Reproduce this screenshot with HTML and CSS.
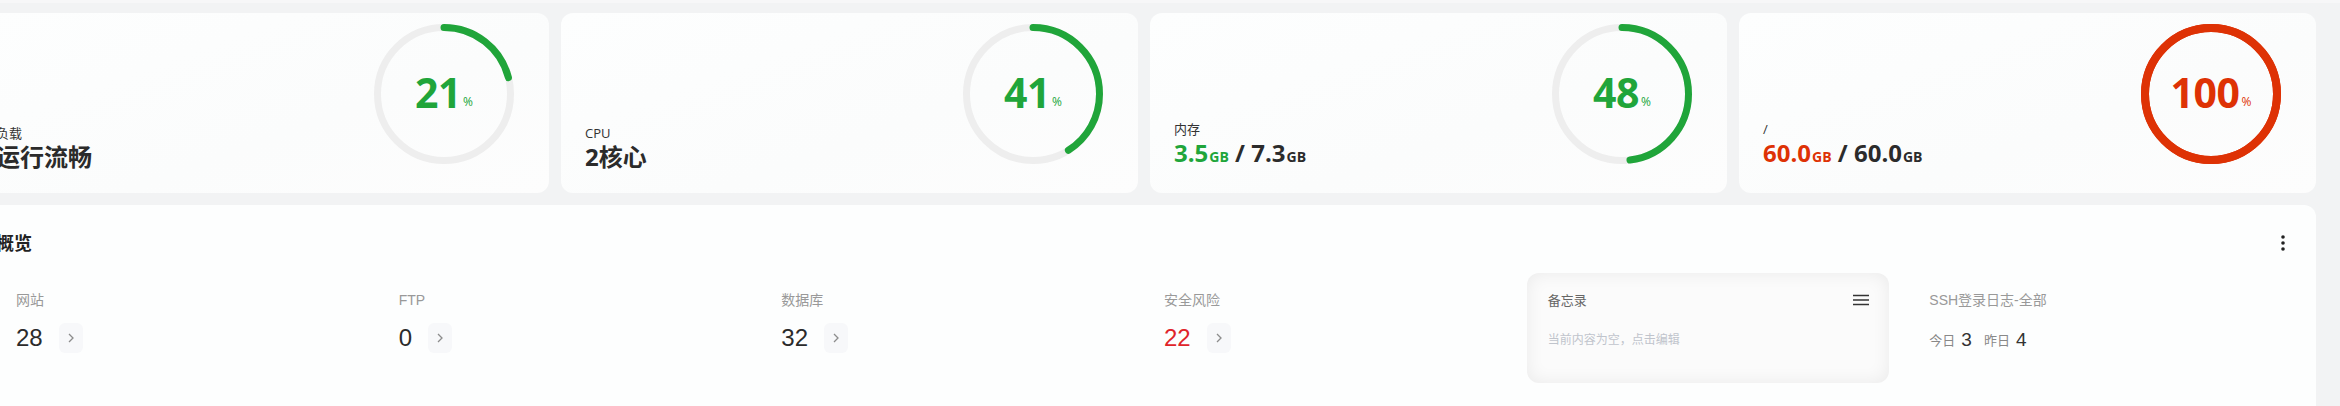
FILE: index.html
```html
<!DOCTYPE html>
<html lang="zh-CN">

<head>
    <meta charset="UTF-8" />
    <title>首页 - 状态</title>
    <link rel="stylesheet" href="styles.css">
</head>

<body>
    <div class="page">
        <section class="stats">
            <div class="stat-card">
                <div class="stat-info">
                    <div class="stat-label">负载</div>
                    <div class="stat-value">运行流畅</div>
                </div>
                <div class="ring">
                    <svg viewBox="0 0 140 140" width="140" height="140">
                        <circle class="ring-track" cx="70" cy="70" r="66.5" />
                        <circle class="ring-bar" cx="70" cy="70" r="66.5" stroke-dasharray="87.7 417.8" />
                    </svg>
                    <div class="ring-text">21<span class="pct">%</span></div>
                </div>
            </div>

            <div class="stat-card">
                <div class="stat-info">
                    <div class="stat-label">CPU</div>
                    <div class="stat-value">2核心</div>
                </div>
                <div class="ring">
                    <svg viewBox="0 0 140 140" width="140" height="140">
                        <circle class="ring-track" cx="70" cy="70" r="66.5" />
                        <circle class="ring-bar" cx="70" cy="70" r="66.5" stroke-dasharray="171.3 417.8" />
                    </svg>
                    <div class="ring-text">41<span class="pct">%</span></div>
                </div>
            </div>

            <div class="stat-card">
                <div class="stat-info">
                    <div class="stat-label">内存</div>
                    <div class="stat-value"><span class="ok">3.5<small>GB</small></span> / 7.3<small>GB</small></div>
                </div>
                <div class="ring">
                    <svg viewBox="0 0 140 140" width="140" height="140">
                        <circle class="ring-track" cx="70" cy="70" r="66.5" />
                        <circle class="ring-bar" cx="70" cy="70" r="66.5" stroke-dasharray="200.5 417.8" />
                    </svg>
                    <div class="ring-text">48<span class="pct">%</span></div>
                </div>
            </div>

            <div class="stat-card">
                <div class="stat-info">
                    <div class="stat-label">/</div>
                    <div class="stat-value"><span class="full">60.0<small>GB</small></span> / 60.0<small>GB</small></div>
                </div>
                <div class="ring ring-full">
                    <svg viewBox="0 0 140 140" width="140" height="140">
                        <circle class="ring-track" cx="70" cy="70" r="66" />
                        <circle class="ring-bar" cx="70" cy="70" r="66" stroke-dasharray="414.7 414.7" />
                    </svg>
                    <div class="ring-text">100<span class="pct">%</span></div>
                </div>
            </div>
        </section>

        <section class="overview">
            <div class="overview-head">
                <h2>概览</h2>
                <svg class="more" width="4" height="16" viewBox="0 0 4 16">
                    <circle cx="2" cy="2" r="1.8" />
                    <circle cx="2" cy="8" r="1.8" />
                    <circle cx="2" cy="14" r="1.8" />
                </svg>
            </div>

            <div class="overview-grid">
                <div class="ov-item">
                    <div class="ov-label">网站</div>
                    <div class="ov-row">
                        <span class="ov-num">28</span>
                        <span class="ov-go"><svg width="6" height="10" viewBox="0 0 6 10"><path d="M1 1l4 4-4 4" /></svg></span>
                    </div>
                </div>
                <div class="ov-item">
                    <div class="ov-label">FTP</div>
                    <div class="ov-row">
                        <span class="ov-num">0</span>
                        <span class="ov-go"><svg width="6" height="10" viewBox="0 0 6 10"><path d="M1 1l4 4-4 4" /></svg></span>
                    </div>
                </div>
                <div class="ov-item">
                    <div class="ov-label">数据库</div>
                    <div class="ov-row">
                        <span class="ov-num">32</span>
                        <span class="ov-go"><svg width="6" height="10" viewBox="0 0 6 10"><path d="M1 1l4 4-4 4" /></svg></span>
                    </div>
                </div>
                <div class="ov-item">
                    <div class="ov-label">安全风险</div>
                    <div class="ov-row">
                        <span class="ov-num danger">22</span>
                        <span class="ov-go"><svg width="6" height="10" viewBox="0 0 6 10"><path d="M1 1l4 4-4 4" /></svg></span>
                    </div>
                </div>
                <div class="memo">
                    <div class="memo-head">
                        <span>备忘录</span>
                        <svg width="16" height="12" viewBox="0 0 16 12">
                            <path d="M0 1.5h16M0 6h16M0 10.5h16" />
                        </svg>
                    </div>
                    <div class="memo-empty">当前内容为空，点击编辑</div>
                </div>
                <div class="ov-item">
                    <div class="ov-label">SSH登录日志-全部</div>
                    <div class="ssh-row">
                        <span>今日</span><b>3</b>
                        <span>昨日</span><b>4</b>
                    </div>
                </div>
            </div>
        </section>
    </div>
</body>

</html>
```

FILE: styles.css
```css
body {
    margin: 0;
    background: linear-gradient(180deg, #f7f7f8 0, #f7f7f8 3px, #f2f3f4 3px);
    font-family: 'Open Sans', 'Noto Sans CJK SC', sans-serif;
    color: #333;
    overflow: hidden;
}

.page {
    margin-left: -28px;
    padding: 13px 24px 0 0;
}

/* top stat cards */
.stats {
    display: grid;
    grid-template-columns: repeat(4, 1fr);
    gap: 12px;
}

.stat-card {
    height: 180px;
    box-sizing: border-box;
    padding: 0 24px;
    background: linear-gradient(160deg, #fdfefe 0%, #fbfcfc 60%, #fdfdfd 100%);
    border-radius: 12px;
    display: flex;
    justify-content: space-between;
}

.stat-info {
    align-self: flex-end;
    padding-bottom: 21px;
}

.stat-label {
    font-size: 13px;
    line-height: 18px;
    color: #333;
}

.stat-value {
    font-size: 24px;
    line-height: 30px;
    font-weight: 700;
    color: #2b2b2b;
}

.stat-value small {
    font-size: 14px;
    font-weight: 700;
    margin-left: 1px;
}

.stat-value .ok {
    color: #20a53a;
}

.stat-value .full {
    color: #de3205;
}

.ring {
    position: relative;
    width: 140px;
    height: 140px;
    margin: 11px 11px 0 0;
}

.ring svg {
    display: block;
    transform: rotate(-90deg);
}

.ring-track {
    fill: none;
    stroke: #eeeeee;
    stroke-width: 7;
}

.ring-bar {
    fill: none;
    stroke: #20a53a;
    stroke-width: 7;
    stroke-linecap: round;
}

.ring-full .ring-track,
.ring-full .ring-bar {
    stroke: #de3205;
    stroke-width: 8;
}

.ring-text {
    position: absolute;
    inset: 0;
    display: flex;
    align-items: center;
    justify-content: center;
    padding-bottom: 5px;
    font-size: 41px;
    font-weight: 700;
    letter-spacing: -0.5px;
    color: #20a53a;
}

.ring-full .ring-text {
    color: #de3205;
}

.ring-text .pct {
    font-size: 12px;
    font-weight: 400;
    letter-spacing: 0;
    margin: 20px 0 0 2px;
}

/* overview panel */
.overview {
    margin-top: 12px;
    background: #fdfefe;
    border-radius: 12px 12px 0 0;
    padding: 26px 24px 24px;
}

.overview-head {
    display: flex;
    justify-content: space-between;
    align-items: center;
    padding-right: 7px;
}

.overview-head h2 {
    margin: 0;
    font-size: 18px;
    line-height: 24px;
    font-weight: 700;
    color: #222;
}

.more {
    fill: #222;
}

.overview-grid {
    margin-top: 18px;
    display: grid;
    grid-template-columns: repeat(6, 1fr);
}

.ov-item {
    padding: 17px 0 0 20px;
}

.ov-label {
    font-family: 'Liberation Sans', 'Noto Sans CJK SC', sans-serif;
    font-size: 14px;
    line-height: 20px;
    color: #999;
}

.ov-row {
    margin-top: 13px;
    display: flex;
    align-items: center;
    gap: 16px;
}

.ov-num {
    font-family: 'Liberation Sans', sans-serif;
    font-size: 24px;
    line-height: 30px;
    color: #2b2b2b;
}

.ov-num.danger {
    color: #e0242a;
}

.ov-go {
    width: 24px;
    height: 30px;
    border-radius: 6px;
    background: #f7f8fa;
    display: flex;
    align-items: center;
    justify-content: center;
}

.ov-go path {
    fill: none;
    stroke: #8c8c8c;
    stroke-width: 1.3;
}

.memo {
    height: 110px;
    margin-right: 20px;
    box-sizing: border-box;
    padding: 17px 20px 0 21px;
    border-radius: 12px;
    background: #fbfbfb;
    box-shadow: inset 0 0 18px rgba(0, 0, 0, 0.07);
}

.memo-head {
    display: flex;
    justify-content: space-between;
    align-items: center;
    font-size: 13px;
    line-height: 20px;
    color: #666;
}

.memo-head path {
    stroke: #333;
    stroke-width: 1.3;
}

.memo-empty {
    margin-top: 20px;
    font-size: 12px;
    line-height: 20px;
    color: #c0c4cc;
}

.ssh-row {
    margin-top: 20px;
    display: flex;
    align-items: center;
    font-size: 13px;
    line-height: 20px;
    color: #888;
}

.ssh-row b {
    font-family: 'Liberation Sans', sans-serif;
    font-weight: 400;
    font-size: 19px;
    color: #333;
    margin: 0 12px 0 6px;
}
```
